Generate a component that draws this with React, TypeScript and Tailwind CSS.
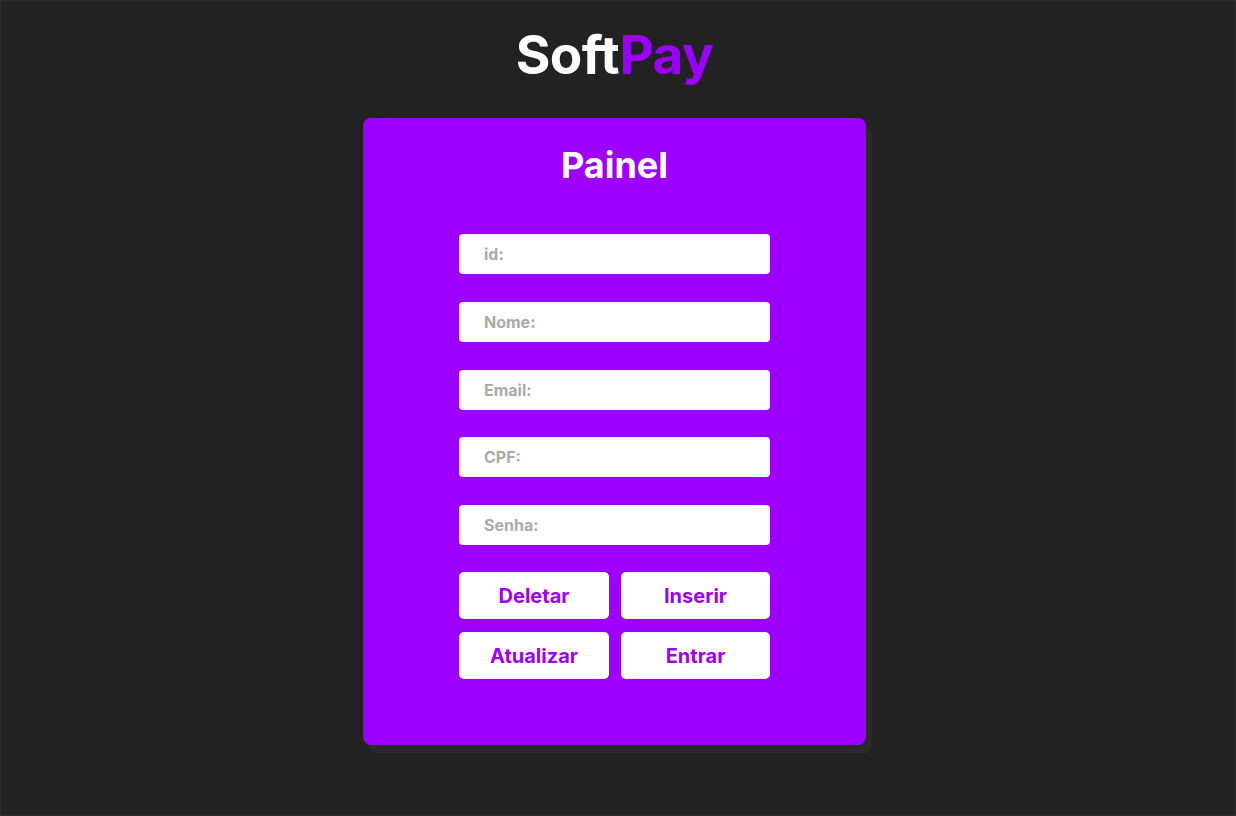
import React from "react";

export default function App() {
  const fields = ["id:", "Nome:", "Email:", "CPF:", "Senha:"];
  return (
    <div
      className="w-[1236px] h-[816px] bg-[#222222] border border-[#2c2c2c] pr-[7px] flex flex-col items-center"
      style={{ fontFamily: "Inter, 'Noto Sans', sans-serif" }}
    >
      <h1 className="mt-[22px] text-[53px] leading-[64px] font-bold tracking-[-0.5px] text-white">
        Soft<span className="text-[#9b00ff]">Pay</span>
      </h1>
      <div className="mt-[31px] w-[503px] h-[627px] rounded-[8px] bg-[#9e00ff] shadow-[6px_8px_0_#2a2a2a] flex flex-col items-center">
        <h2 className="pt-[25px] text-[36px] leading-[44px] font-bold text-white">Painel</h2>
        <div className="mt-[47px] flex flex-col gap-[27.75px]">
          {fields.map((f) => (
            <input
              key={f}
              placeholder={f}
              className="w-[311px] h-[40px] rounded-[4px] bg-white pl-[25px] text-[16px] font-bold text-[#333] placeholder:text-[#aaaaaa] outline-none"
            />
          ))}
        </div>
        <div className="mt-[27px] grid grid-cols-[150px_149px] gap-x-[12px] gap-y-[13px]">
          {["Deletar", "Inserir", "Atualizar", "Entrar"].map((b) => (
            <button
              key={b}
              className="h-[47px] rounded-[5px] bg-white text-[20px] font-bold text-[#9b00ff]"
            >
              {b}
            </button>
          ))}
        </div>
      </div>
    </div>
  );
}
